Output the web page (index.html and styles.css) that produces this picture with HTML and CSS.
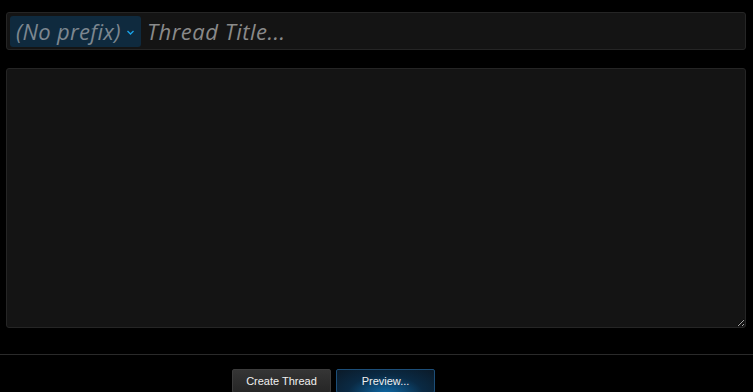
FILE: index.html
```html
<!DOCTYPE html>
<html lang="en">
<head>
  <meta charset="UTF-8" />
  <title>Create Thread</title>
  <link rel="stylesheet" href="styles.css">
</head>
<body>

  <form class="thread-form">
    <div class="title-bar">
      <span class="prefix">(No prefix)
        <svg class="chevron" width="7" height="5" viewBox="0 0 7 5"><path d="M0.5 1 L3.5 4 L6.5 1" fill="none" stroke="#1aa3e8" stroke-width="1.4"/></svg>
      </span>
      <input class="title-input" type="text" placeholder="Thread Title..." />
    </div>

    <textarea class="message"></textarea>

    <div class="actions">
      <button type="button" class="btn create">Create Thread</button>
      <button type="button" class="btn preview">Preview...</button>
    </div>
  </form>

</body>
</html>
```

FILE: styles.css
```css
body {
  background: #000;
  margin: 0;
  font-family: 'Open Sans', sans-serif;
  overflow: hidden;
}

.thread-form {
  padding-top: 12px;
}

.title-bar {
  display: flex;
  align-items: center;
  margin: 0 7px 0 6px;
  height: 38px;
  padding: 0 3px;
  background: #141414;
  border: 1px solid #252525;
  border-radius: 3px;
  box-sizing: border-box;
}

.prefix {
  display: flex;
  align-items: center;
  height: 31px;
  width: 131px;
  box-sizing: border-box;
  padding-left: 6px;
  background: #0f2a3e;
  border-radius: 3px;
  color: #7d8790;
  font-style: italic;
  font-size: 22px;
  letter-spacing: 0.3px;
  white-space: nowrap;
}

.chevron {
  margin-left: 6px;
  margin-top: 2px;
}

.title-input {
  flex: 1;
  background: transparent;
  border: none;
  outline: none;
  padding: 0 0 0 6px;
  font-family: 'Open Sans', sans-serif;
  font-style: italic;
  font-size: 22px;
  letter-spacing: 0.5px;
  color: #999;
}

.title-input::placeholder {
  color: #8a8a8a;
}

.message {
  display: block;
  margin: 18px 7px 0 6px;
  width: calc(100% - 13px);
  height: 260px;
  box-sizing: border-box;
  background: #141414;
  border: 1px solid #252525;
  border-radius: 3px;
  color: #ccc;
}

.actions {
  margin-top: 26px;
  border-top: 1px solid #2a2a2a;
  padding: 14px 0 0 232px;
  display: flex;
  gap: 5px;
}

.btn {
  width: 99px;
  height: 24px;
  font-family: 'Liberation Sans', sans-serif;
  font-size: 11px;
  color: #f0f0f0;
  border-radius: 2px;
  cursor: pointer;
}

.create {
  background: linear-gradient(#353535, #262626);
  border: 1px solid #3c3c3c;
}

.preview {
  background: radial-gradient(ellipse at 50% 110%, #0e6aa8 0%, #0a2a44 55%, #0b1a28 100%);
  border: 1px solid #1c4e78;
}
```
